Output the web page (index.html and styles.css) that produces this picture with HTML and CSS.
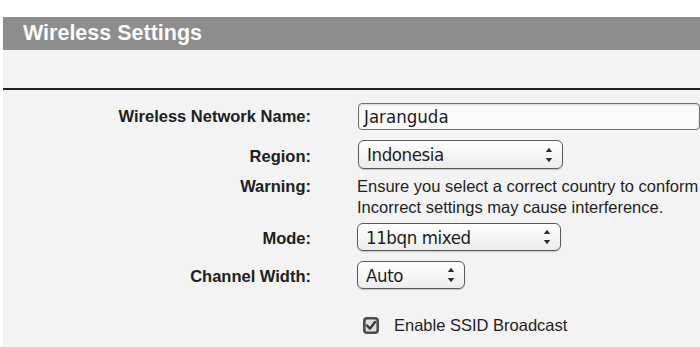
FILE: index.html
```html
<!DOCTYPE html>
<html>
<head>
  <title>Wireless Settings</title>
  <link rel="stylesheet" href="styles.css">
</head>
<body>
  <div class="page">
    <h1 class="title-bar">Wireless Settings</h1>
    <div class="panel">
      <div class="spacer"></div>
      <div class="form">
        <div class="row">
          <label class="label">Wireless Network Name:</label>
          <div class="text-input">Jaranguda</div>
        </div>
        <div class="row row-select">
          <label class="label">Region:</label>
          <div class="select select-region">
            <span>Indonesia</span>
            <svg class="arrows" width="8" height="18" viewBox="0 0 8 18"><path d="M0.8 6 L4 1.8 L7.2 6 Z M0.8 12 L4 16.2 L7.2 12 Z" fill="#2e2e2e"/></svg>
          </div>
        </div>
        <div class="row row-warning">
          <label class="label">Warning:</label>
          <p class="warning-text">Ensure you select a correct country to conform<br>Incorrect settings may cause interference.</p>
        </div>
        <div class="row row-select">
          <label class="label">Mode:</label>
          <div class="select select-mode">
            <span>11bqn mixed</span>
            <svg class="arrows" width="8" height="18" viewBox="0 0 8 18"><path d="M0.8 6 L4 1.8 L7.2 6 Z M0.8 12 L4 16.2 L7.2 12 Z" fill="#2e2e2e"/></svg>
          </div>
        </div>
        <div class="row row-select">
          <label class="label">Channel Width:</label>
          <div class="select select-width">
            <span>Auto</span>
            <svg class="arrows" width="8" height="18" viewBox="0 0 8 18"><path d="M0.8 6 L4 1.8 L7.2 6 Z M0.8 12 L4 16.2 L7.2 12 Z" fill="#2e2e2e"/></svg>
          </div>
        </div>
        <div class="row row-check">
          <div class="label"></div>
          <div class="check">
            <svg class="check-box" width="16" height="17" viewBox="0 0 16 17"><rect x="1.3" y="1.3" width="13.4" height="14.4" rx="2.8" fill="#dedede" stroke="#4c4c4c" stroke-width="2.6"/><path d="M4 8.5 L7 11.6 L12 5" fill="none" stroke="#363636" stroke-width="2.3" stroke-linecap="round" stroke-linejoin="round"/></svg>
            <span>Enable SSID Broadcast</span>
          </div>
        </div>
      </div>
    </div>
  </div>
</body>
</html>
```

FILE: styles.css
```css
html, body {
  margin: 0;
  background-color: #ffffff;
  overflow: hidden;
}

body {
  font-family: "Liberation Sans", Arial, sans-serif;
  color: #1e1e1e;
}

.page {
  padding-top: 17px;
  margin-left: 3px;
}

.title-bar {
  margin: 0;
  height: 33px;
  line-height: 33px;
  padding-left: 20px;
  background-color: #8d8d8d;
  color: #fbfbfb;
  font-size: 21.5px;
  font-weight: bold;
}

.panel {
  background-color: #f3f3f3;
  height: 300px;
}

.spacer {
  height: 38px;
  border-bottom: 2px solid #222;
}

.form {
  padding-top: 13px;
}

.row {
  display: flex;
  align-items: center;
}

.label {
  width: 308px;
  margin-right: 46px;
  flex-shrink: 0;
  text-align: right;
  font-size: 16.5px;
  font-weight: bold;
  color: #202020;
}

.row-select {
  margin-top: 10px;
}

.row-select .label {
  padding-top: 3px;
}

.text-input {
  width: 335px;
  height: 25px;
  line-height: 25px;
  flex-shrink: 0;
  padding-left: 5px;
  border: 1px solid #6e6e6e;
  border-radius: 4px;
  background-color: #fbfbfb;
  box-shadow: inset 0 1px 2px rgba(0, 0, 0, 0.15);
  font-family: "DejaVu Sans Condensed", "DejaVu Sans", sans-serif;
  font-stretch: condensed;
  font-size: 18.5px;
  color: #1c1c1c;
  margin-left: 1px;
}

.select {
  display: flex;
  align-items: center;
  justify-content: space-between;
  height: 26px;
  padding: 0 8px 0 8px;
  border: 1px solid #5a5a5a;
  border-radius: 6px;
  background: linear-gradient(#ffffff, #ececec);
  box-shadow: 0 1px 1px rgba(0, 0, 0, 0.2);
  font-family: "DejaVu Sans Condensed", "DejaVu Sans", sans-serif;
  font-stretch: condensed;
  font-size: 18.5px;
  letter-spacing: -0.4px;
  color: #1c1c1c;
  box-sizing: content-box;
}

.select-region {
  width: 187px;
  margin-left: 1px;
  height: 27px;
}

.select-mode {
  width: 186px;
}

.select-width {
  width: 90px;
}

.arrows {
  margin-right: 1px;
}

.row-warning {
  margin-top: 7px;
  align-items: flex-start;
}

.row-warning .label,
.warning-text {
  line-height: 21px;
}

.warning-text {
  margin: 0;
  font-size: 16.5px;
  white-space: nowrap;
  color: #1e1e1e;
}

.row-warning + .row-select {
  margin-top: 5px;
}

.row-check {
  margin-top: 27px;
}

.check {
  display: flex;
  align-items: center;
  margin-left: 6px;
  font-size: 16.5px;
}

.check-box {
  margin-right: 15px;
}
```
